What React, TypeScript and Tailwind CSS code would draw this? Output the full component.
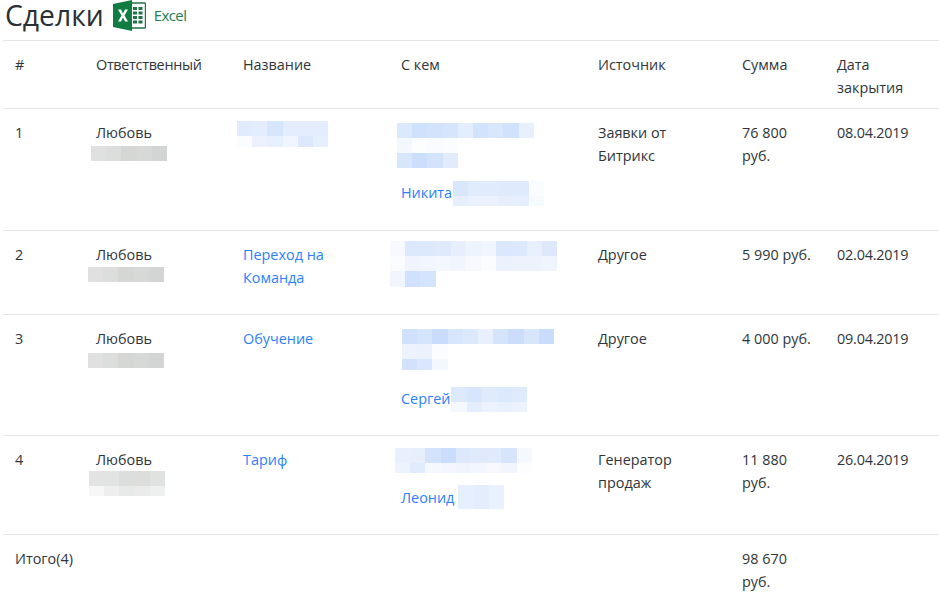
const sans = "font-['Open_Sans','Noto_Sans',sans-serif]";

type MosaicRow = { h: number; cells: string[] };

function Mosaic({ rows, className }: { rows: MosaicRow[]; className?: string }) {
  return (
    <div className={className}>
      {rows.map((row, i) => (
        <div key={i} className="flex" style={{ height: row.h }}>
          {row.cells.map((c, j) => (
            <div key={j} className="w-[15.2px] shrink-0" style={{ background: c }} />
          ))}
        </div>
      ))}
    </div>
  );
}

const gray1: MosaicRow[] = [{ h: 15, cells: ["#e0e0e0", "#dcdddd", "#d6d6d5", "#d7d8d8", "#d3d4d4"] }];
const gray4: MosaicRow[] = [
  { h: 15, cells: ["#e3e3e3", "#e2e3e3", "#dcdddd", "#dddddc", "#e0e1e1"] },
  { h: 10, cells: ["#f7f7f7", "#eeeeee", "#e8e9e9", "#ebebeb", "#eeefef"] },
];

const contact1: MosaicRow[] = [
  { h: 15, cells: ["#dce8fb", "#cfe2fd", "#d2e3fb", "#d6e5fb", "#e3edfc", "#d2e3fd", "#d9e7fc", "#d1e2fd", "#e8f0fd"] },
  { h: 15, cells: ["#f3f7fe", "#fcfdff", "#f9fbfe", "#fafcff"] },
  { h: 15, cells: ["#d8e6fb", "#cbdffd", "#d3e3fb", "#e2ebfc"] },
];
const contact2: MosaicRow[] = [
  { h: 15, cells: ["#f6f9ff", "#dbe8fd", "#dce9fd", "#dfeafc", "#e8effc", "#eef4fd", "#f1f5fe", "#dae7fc", "#dce8fd", "#e9f0fd", "#dde8fb"] },
  { h: 15, cells: ["#fbfcff", "#eff4fe", "#f2f6fe", "#f4f7fe", "#f0f5fe", "#f7f9fe", "#fafcfe", "#ecf2fd", "#edf2fd", "#edf2fd", "#eff4fd"] },
  { h: 16, cells: ["#f1f6fe", "#cfe1fd", "#d4e4fc"] },
];
const contact3: MosaicRow[] = [
  { h: 15, cells: ["#cfe1fc", "#d5e5fc", "#c9dcfb", "#d8e6fc", "#dce9fc", "#e8f0fd", "#d6e4fb", "#cbddfb", "#d8e5fb", "#cadcfb"] },
  { h: 15, cells: ["#edf2fd", "#ecf2fd", "#fafcff"] },
  { h: 11, cells: ["#d2e2fb", "#d9e6fb", "#f3f7fe"] },
];
const contact4: MosaicRow[] = [
  { h: 15, cells: ["#e9f0fd", "#e7effd", "#d4e3fc", "#c9ddfc", "#dde8fc", "#e0eafc", "#e0eafc", "#d7e5fc", "#f5f8fe"] },
  { h: 10, cells: ["#edf3fe", "#e0ebfd", "#f5f8fe", "#f3f6fe", "#f0f4fd", "#f2f6fe", "#f7f9fe", "#f1f5fe", "#fcfdff"] },
];
const nikita: MosaicRow[] = [
  { h: 15, cells: ["#d9e7fd", "#e0ebfd", "#e0ebfd", "#dfeafd", "#dfeafd", "#fafcff"] },
  { h: 10, cells: ["#e6effd", "#ebf1fe", "#ebf1fe", "#e7effd", "#e5eefd", "#f7fafe"] },
];
const sergey: MosaicRow[] = [
  { h: 15, cells: ["#dde9fd", "#d8e6fd", "#e0eafd", "#dce8fd", "#e0eafd"] },
  { h: 10, cells: ["#f5f8fe", "#e5eefd", "#ecf2fe", "#e9f0fe", "#edf3fe"] },
];
const leonid: MosaicRow[] = [{ h: 24, cells: ["#e6effe", "#e3edfe", "#e9f1fe"] }];
const deal1: MosaicRow[] = [
  { h: 15, cells: ["#e0ebfe", "#e4edfd", "#d5e6fd", "#e4edfd", "#e3edfe", "#e3edfe"] },
  { h: 11, cells: ["#fbfcff", "#ebf2fe", "#e6f0fe", "#f0f5fe", "#dce8fd", "#e6effe"] },
];

function ExcelIcon() {
  return (
    <svg width="33" height="32" viewBox="0 0 33 32" className="shrink-0">
      <path d="M18 3h13.500a1 1 0 0 1 1 1v23a1 1 0 0 1-1 1H18z" fill="#fff" stroke="#217346" strokeWidth="1.400" />
      <path d="M20 7h4v3h-4zM25.500 7h4v3h-4zM20 11.500h4v3h-4zM25.500 11.500h4v3h-4zM20 16h4v3h-4zM25.500 16h4v3h-4zM20 20.500h4v3h-4zM25.500 20.500h4v3h-4z" fill="#217346" />
      <path d="M0 4 19 0v31L0 27z" fill="#107c41" />
      <path d="M5 9.500h3l2 4 2-4h3l-3.500 6 3.500 6h-3l-2-4-2 4H5l3.500-6z" fill="#fff" />
    </svg>
  );
}

const linkClass = "text-[#2b7fff]";
const th = "px-3 pt-3 pb-[9px] text-left font-normal align-top";
const td = "p-3 align-top border-t border-[#e3e5e8]";
const dateTd = `${td} tracking-[-0.2px]`;

export default function App() {
  return (
    <div className={`h-[597px] w-[939px] overflow-hidden bg-white pl-[3px] text-[14.4px] leading-[23px] text-[#2f353b] ${sans}`}>
      <div className="flex h-[40px] items-start">
        <h2 className="ml-[2px] text-[28.3px] leading-[30px] font-normal text-[#2b3036]">Сделки</h2>
        <div className="ml-[9px] flex items-start">
          <ExcelIcon />
          <span className="mt-[5px] ml-[8px] text-[15px] leading-[20px] tracking-[-0.6px] text-[#1f8050]">Excel</span>
        </div>
      </div>
      <table className="w-[936px] table-fixed">
        <colgroup>
          <col className="w-[81px]" />
          <col className="w-[147px]" />
          <col className="w-[158px]" />
          <col className="w-[197px]" />
          <col className="w-[144px]" />
          <col className="w-[95px]" />
          <col className="w-[114px]" />
        </colgroup>
        <thead>
          <tr className="h-[68px] border-t border-[#e3e5e8]">
            <th className={th}>#</th>
            <th className={`${th} tracking-[-0.3px]`}>Ответственный</th>
            <th className={th}>Название</th>
            <th className={th}>С кем</th>
            <th className={th}>Источник</th>
            <th className={th}>Сумма</th>
            <th className={th}>Дата закрытия</th>
          </tr>
        </thead>
        <tbody>
          <tr className="h-[122px]">
            <td className={td}>1</td>
            <td className={td}>
              Любовь
              <Mosaic rows={gray1} className="-ml-[5px] mt-[2px]" />
            </td>
            <td className={td}>
              <Mosaic rows={deal1} className="-ml-[6px]" />
            </td>
            <td className={td}>
              <Mosaic rows={contact1} className="-ml-[4px] mt-[2px]" />
              <div className="mt-[13px] flex">
                <span className={linkClass}>Никита</span>
                <Mosaic rows={nikita} className="ml-[1px]" />
              </div>
            </td>
            <td className={td}>Заявки от Битрикс</td>
            <td className={td}>76 800 руб.</td>
            <td className={dateTd}>08.04.2019</td>
          </tr>
          <tr className="h-[84px]">
            <td className={td}>2</td>
            <td className={td}>
              Любовь
              <Mosaic rows={gray1} className="-ml-[8px] mt-[1px]" />
            </td>
            <td className={td}>
              <span className={linkClass}>Переход на Команда</span>
            </td>
            <td className={td}>
              <Mosaic rows={contact2} className="-ml-[11px] -mt-[2px]" />
            </td>
            <td className={td}>Другое</td>
            <td className={td}>5 990 руб.</td>
            <td className={dateTd}>02.04.2019</td>
          </tr>
          <tr className="h-[121px]">
            <td className={td}>3</td>
            <td className={td}>
              Любовь
              <Mosaic rows={gray1} className="-ml-[8px] mt-[3px]" />
            </td>
            <td className={td}>
              <span className={linkClass}>Обучение</span>
            </td>
            <td className={td}>
              <Mosaic rows={contact3} className="ml-[1px] mt-[2px]" />
              <div className="mt-[17px] flex">
                <span className={linkClass}>Сергей</span>
                <Mosaic rows={sergey} className="ml-[1px]" />
              </div>
            </td>
            <td className={td}>Другое</td>
            <td className={td}>4 000 руб.</td>
            <td className={dateTd}>09.04.2019</td>
          </tr>
          <tr className="h-[99px]">
            <td className={td}>4</td>
            <td className={td}>
              Любовь
              <Mosaic rows={gray4} className="-ml-[7px]" />
            </td>
            <td className={td}>
              <span className={linkClass}>Тариф</span>
            </td>
            <td className={td}>
              <Mosaic rows={contact4} className="-ml-[6px]" />
              <div className="mt-[13px] flex">
                <span className={linkClass}>Леонид</span>
                <Mosaic rows={leonid} className="ml-[4px] -mt-[1px]" />
              </div>
            </td>
            <td className={td}>Генератор продаж</td>
            <td className={td}>11 880 руб.</td>
            <td className={dateTd}>26.04.2019</td>
          </tr>
          <tr>
            <td className={td} colSpan={2}>Итого(4)</td>
            <td className={td} />
            <td className={td} />
            <td className={td} />
            <td className={td}>98 670 руб.</td>
            <td className={td} />
          </tr>
        </tbody>
      </table>
    </div>
  );
}
